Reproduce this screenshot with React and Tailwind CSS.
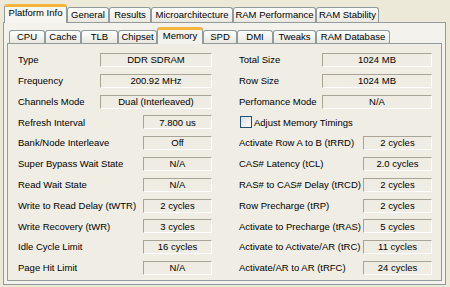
import React from "react";

const outerTabs = [
  { label: "Platform Info", w: 63, active: true },
  { label: "General", w: 42 },
  { label: "Results", w: 42 },
  { label: "Microarchitecture", w: 82 },
  { label: "RAM Performance", w: 83 },
  { label: "RAM Stability", w: 63 },
];

const innerTabs = [
  { label: "CPU", w: 36 },
  { label: "Cache", w: 36 },
  { label: "TLB", w: 37 },
  { label: "Chipset", w: 39 },
  { label: "Memory", w: 46, active: true },
  { label: "SPD", w: 34 },
  { label: "DMI", w: 36 },
  { label: "Tweaks", w: 43 },
  { label: "RAM Database", w: 74 },
];

// left column: label, value, wide box?
const leftRows = [
  ["Type", "DDR SDRAM", true],
  ["Frequency", "200.92 MHz", true],
  ["Channels Mode", "Dual (Interleaved)", true],
  ["Refresh Interval", "7.800 us"],
  ["Bank/Node Interleave", "Off"],
  ["Super Bypass Wait State", "N/A"],
  ["Read Wait State", "N/A"],
  ["Write to Read Delay (tWTR)", "2 cycles"],
  ["Write Recovery (tWR)", "3 cycles"],
  ["Idle Cycle Limit", "16 cycles"],
  ["Page Hit Limit", "N/A"],
];

const rightTop = [
  ["Total Size", "1024 MB"],
  ["Row Size", "1024 MB"],
  ["Perfomance Mode", "N/A"],
];

const rightTimings = [
  ["Activate Row A to B (tRRD)", "2 cycles"],
  ["CAS# Latency (tCL)", "2.0 cycles"],
  ["RAS# to CAS# Delay (tRCD)", "2 cycles"],
  ["Row Precharge (tRP)", "2 cycles"],
  ["Activate to Precharge (tRAS)", "5 cycles"],
  ["Activate to Activate/AR (tRC)", "11 cycles"],
  ["Activate/AR to AR (tRFC)", "24 cycles"],
];

function OuterTab({ label, w, active }) {
  if (active) {
    return (
      <div
        className="relative z-10 -mb-px h-[19px] flex items-start justify-center pt-[1px] rounded-t-[3px] border-x border-[#919B9C] border-t-[3px] border-t-[#F5B43C] bg-[#F6F5F0]"
        style={{ width: w }}
      >
        {label}
      </div>
    );
  }
  return (
    <div
      className="h-[15px] flex items-center justify-center rounded-t-[3px] border border-b-0 border-[#919B9C] bg-linear-to-b from-white to-[#E9E7DE]"
      style={{ width: w }}
    >
      {label}
    </div>
  );
}

function InnerTab({ label, w, active }) {
  if (active) {
    return (
      <div
        className="relative z-10 -mb-px h-[17px] flex items-start justify-center pt-[1px] rounded-t-[3px] border-x border-[#919B9C] border-t-[3px] border-t-[#F5B43C] bg-[#F3F2EC]"
        style={{ width: w }}
      >
        {label}
      </div>
    );
  }
  return (
    <div
      className="h-[13px] flex items-center justify-center rounded-t-[3px] border border-b-0 border-[#919B9C] bg-linear-to-b from-white to-[#E9E7DE]"
      style={{ width: w }}
    >
      {label}
    </div>
  );
}

function Box({ children, wide, w }) {
  return (
    <div
      className={
        "h-[14px] flex items-center justify-center border border-t-[#A8A596] border-l-[#A8A596] border-b-white border-r-white bg-[#EEECE3] " +
        (wide ? "" : "w-[69px]")
      }
      style={wide ? { width: w } : undefined}
    >
      {children}
    </div>
  );
}

function Row({ label, value, wide, w }) {
  return (
    <div className="h-[20.8px] flex items-center justify-between">
      <span>{label}</span>
      <Box wide={wide} w={w}>{value}</Box>
    </div>
  );
}

export default function App() {
  return (
    <div
      className="w-[450px] h-[287px] overflow-hidden bg-[#ECE9D8] text-black text-[9.5px] leading-none"
      style={{ fontFamily: '"Liberation Sans", Arial, sans-serif' }}
    >
      {/* onglets principaux */}
      <div className="h-[22px] pl-[4px] flex items-end">
        {outerTabs.map(t => (
          <OuterTab key={t.label} {...t} />
        ))}
      </div>
      <div className="ml-[3px] w-[443px] h-[263px] border border-[#919B9C] bg-[#F3F2EC]">
        {/* onglets Platform Info */}
        <div className="h-[20px] pl-[5px] flex items-end">
          {innerTabs.map(t => (
            <InnerTab key={t.label} {...t} />
          ))}
        </div>
        <div className="ml-[3px] w-[435px] h-[238px] border border-[#919B9C] bg-[#EFEDE4] pt-[5.6px] pl-[10px] flex gap-[27px]">
          <div className="w-[194px] flex flex-col">
            {leftRows.map(([l, v, wide]) => (
              <Row key={l} label={l} value={v} wide={wide} w={112} />
            ))}
          </div>
          <div className="w-[193px] flex flex-col">
            {rightTop.map(([l, v]) => (
              <Row key={l} label={l} value={v} wide w={110} />
            ))}
            <div className="h-[20.8px] flex items-center gap-[2px] pl-px">
              <span className="w-[12px] h-[12px] border border-[#1C5180] bg-linear-to-br from-[#DCDCD7] to-white" />
              <span>Adjust Memory Timings</span>
            </div>
            {rightTimings.map(([l, v]) => (
              <Row key={l} label={l} value={v} />
            ))}
          </div>
        </div>
      </div>
    </div>
  );
}
